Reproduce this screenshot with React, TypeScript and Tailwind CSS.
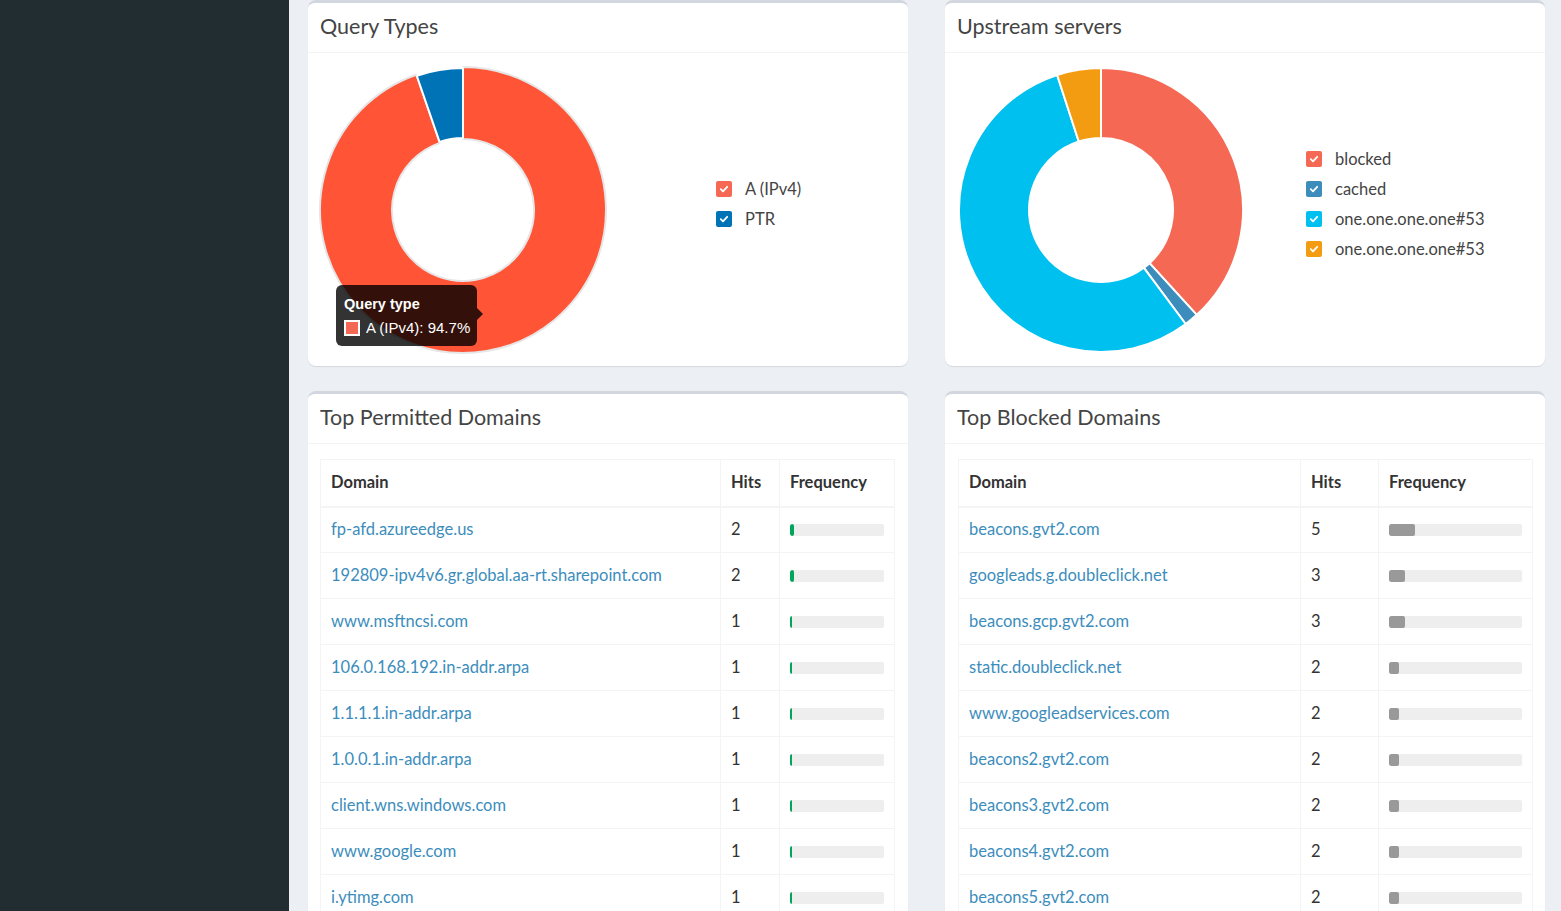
import React from "react";

type Slice = { from: number; to: number; color: string; hover?: boolean };

const arc = (cx: number, cy: number, R: number, r: number, a0: number, a1: number) => {
  const p = (rad: number, a: number) => {
    const t = ((a - 90) * Math.PI) / 180;
    return `${(cx + rad * Math.cos(t)).toFixed(2)} ${(cy + rad * Math.sin(t)).toFixed(2)}`;
  };
  const large = a1 - a0 > 180 ? 1 : 0;
  return `M ${p(R, a0)} A ${R} ${R} 0 ${large} 1 ${p(R, a1)} L ${p(r, a1)} A ${r} ${r} 0 ${large} 0 ${p(r, a0)} Z`;
};

const Donut = ({ slices }: { slices: Slice[] }) => (
  <svg width="300" height="300" viewBox="0 0 300 300">
    {slices.map((s, i) => (
      <path
        key={i}
        d={arc(150, 150, s.hover ? 143 : 142, s.hover ? 71 : 72, s.from, s.to)}
        fill={s.color}
        stroke={s.hover ? "#e6e6e6" : "#ffffff"}
        strokeWidth={2}
        strokeLinejoin="round"
      />
    ))}
  </svg>
);

const Check = ({ color }: { color: string }) => (
  <span className="flex h-4 w-4 items-center justify-center rounded-[2px]" style={{ background: color }}>
    <svg width="10" height="10" viewBox="0 0 10 10">
      <path d="M1.8 5.2 L4 7.3 L8.2 2.8" fill="none" stroke="#fff" strokeWidth="1.8" strokeLinecap="round" strokeLinejoin="round" />
    </svg>
  </span>
);

const Legend = ({ items }: { items: { label: string; color: string }[] }) => (
  <div className="flex flex-col">
    {items.map((it, i) => (
      <div key={i} className="flex h-[30px] items-center gap-[13px] text-[16.5px] text-[#444]">
        <Check color={it.color} />
        <span>{it.label}</span>
      </div>
    ))}
  </div>
);

const Card = ({ title, children, className = "" }: { title: string; children: React.ReactNode; className?: string }) => (
  <div className={`flex flex-col rounded-[8px] border-t-[3px] border-[#d2d6de] bg-white shadow-[0_1px_1px_rgba(0,0,0,0.1)] ${className}`}>
    <div className="flex h-[50px] shrink-0 items-center border-b border-[#f4f4f4] px-[12px] pb-[3px] text-[21.5px] text-[#444]">
      {title}
    </div>
    {children}
  </div>
);

type Row = { domain: string; hits: number; fill: number };

const permitted: Row[] = [
  { domain: "fp-afd.azureedge.us", hits: 2, fill: 4 },
  { domain: "192809-ipv4v6.gr.global.aa-rt.sharepoint.com", hits: 2, fill: 4 },
  { domain: "www.msftncsi.com", hits: 1, fill: 2 },
  { domain: "106.0.168.192.in-addr.arpa", hits: 1, fill: 2 },
  { domain: "1.1.1.1.in-addr.arpa", hits: 1, fill: 2 },
  { domain: "1.0.0.1.in-addr.arpa", hits: 1, fill: 2 },
  { domain: "client.wns.windows.com", hits: 1, fill: 2 },
  { domain: "www.google.com", hits: 1, fill: 2 },
  { domain: "i.ytimg.com", hits: 1, fill: 2 },
];

const blocked: Row[] = [
  { domain: "beacons.gvt2.com", hits: 5, fill: 26 },
  { domain: "googleads.g.doubleclick.net", hits: 3, fill: 16 },
  { domain: "beacons.gcp.gvt2.com", hits: 3, fill: 16 },
  { domain: "static.doubleclick.net", hits: 2, fill: 10 },
  { domain: "www.googleadservices.com", hits: 2, fill: 10 },
  { domain: "beacons2.gvt2.com", hits: 2, fill: 10 },
  { domain: "beacons3.gvt2.com", hits: 2, fill: 10 },
  { domain: "beacons4.gvt2.com", hits: 2, fill: 10 },
  { domain: "beacons5.gvt2.com", hits: 2, fill: 10 },
];

const DomainTable = ({ rows, cols, barColor }: { rows: Row[]; cols: [number, number, number]; barColor: string }) => (
  <table className="border-collapse border border-[#f4f4f4] text-[16.5px] text-[#333]" style={{ tableLayout: "fixed", width: cols[0] + cols[1] + cols[2] }}>
    <colgroup>
      <col style={{ width: cols[0] }} />
      <col style={{ width: cols[1] }} />
      <col style={{ width: cols[2] }} />
    </colgroup>
    <thead>
      <tr className="h-[47px] border-b-2 border-[#f4f4f4] text-left font-bold">
        <th className="border border-[#f4f4f4] px-[10px]">Domain</th>
        <th className="border border-[#f4f4f4] px-[10px]">Hits</th>
        <th className="border border-[#f4f4f4] px-[10px]">Frequency</th>
      </tr>
    </thead>
    <tbody>
      {rows.map((r, i) => (
        <tr key={i} className="h-[46px]">
          <td className="border border-[#f4f4f4] px-[10px] text-[#3c8dbc] whitespace-nowrap">{r.domain}</td>
          <td className="border border-[#f4f4f4] px-[10px]">{r.hits}</td>
          <td className="border border-[#f4f4f4] px-[10px]">
            <div className="h-[12px] w-full overflow-hidden rounded-[2px] bg-[#eeeeee]">
              <div className="h-full rounded-[2px]" style={{ width: r.fill, background: barColor }} />
            </div>
          </td>
        </tr>
      ))}
    </tbody>
  </table>
);

export default function App() {
  return (
    <div className="flex h-[911px] w-[1561px] overflow-hidden bg-[#ecf0f5]" style={{ fontFamily: "Lato, 'Open Sans', sans-serif" }}>
      <div className="w-[289px] shrink-0 bg-[#222d32]" />
      <div className="flex flex-col gap-[25px] pl-[19px]">
        <div className="flex gap-[37px]">
          <Card title="Query Types" className="h-[366px] w-[600px]">
            <div className="flex flex-1 items-start">
              <div className="relative ml-[5px] mt-[7px]">
                <Donut
                  slices={[
                    { from: 0, to: 341, color: "#ff5436", hover: true },
                    { from: 341, to: 360, color: "#0073b7" },
                  ]}
                />
                <div className="absolute left-[23px] top-[225px] flex h-[61px] w-[141px] flex-col justify-center gap-[8px] rounded-[6px] bg-[rgba(0,0,0,0.8)] px-[8px] text-white" style={{ fontFamily: "Arial, 'Liberation Sans', sans-serif" }}>
                  <div className="text-[14.5px] font-bold leading-[16px]">Query type</div>
                  <div className="flex items-center gap-[6px] text-[15px] leading-[16px]">
                    <span className="h-[16px] w-[16px] shrink-0 border-2 border-white bg-[#f56954]" />
                    <span className="whitespace-nowrap">A (IPv4): 94.7%</span>
                  </div>
                  <span className="absolute right-[-6px] top-[23px] h-0 w-0 border-y-[6px] border-l-[6px] border-y-transparent border-l-[rgba(0,0,0,0.8)]" />
                </div>
              </div>
              <div className="ml-[103px] mt-[121px]">
                <Legend
                  items={[
                    { label: "A (IPv4)", color: "#f56954" },
                    { label: "PTR", color: "#0073b7" },
                  ]}
                />
              </div>
            </div>
          </Card>
          <Card title="Upstream servers" className="h-[366px] w-[600px]">
            <div className="flex flex-1 items-start">
              <div className="ml-[6px] mt-[7px]">
                <Donut
                  slices={[
                    { from: 0, to: 137.6, color: "#f56954" },
                    { from: 137.6, to: 143.4, color: "#3c8dbc" },
                    { from: 143.4, to: 342, color: "#00c0ef" },
                    { from: 342, to: 360, color: "#f39c12" },
                  ]}
                />
              </div>
              <div className="ml-[55px] mt-[91px]">
                <Legend
                  items={[
                    { label: "blocked", color: "#f56954" },
                    { label: "cached", color: "#3c8dbc" },
                    { label: "one.one.one.one#53", color: "#00c0ef" },
                    { label: "one.one.one.one#53", color: "#f39c12" },
                  ]}
                />
              </div>
            </div>
          </Card>
        </div>
        <div className="flex items-start gap-[37px]">
          <Card title="Top Permitted Domains" className="w-[600px]">
            <div className="px-[12px] pb-[12px] pt-[15px]">
              <DomainTable rows={permitted} cols={[400, 59, 115]} barColor="#00a65a" />
            </div>
          </Card>
          <Card title="Top Blocked Domains" className="w-[600px]">
            <div className="px-[13px] pb-[12px] pt-[15px]">
              <DomainTable rows={blocked} cols={[342, 78, 154]} barColor="#999999" />
            </div>
          </Card>
        </div>
      </div>
    </div>
  );
}
